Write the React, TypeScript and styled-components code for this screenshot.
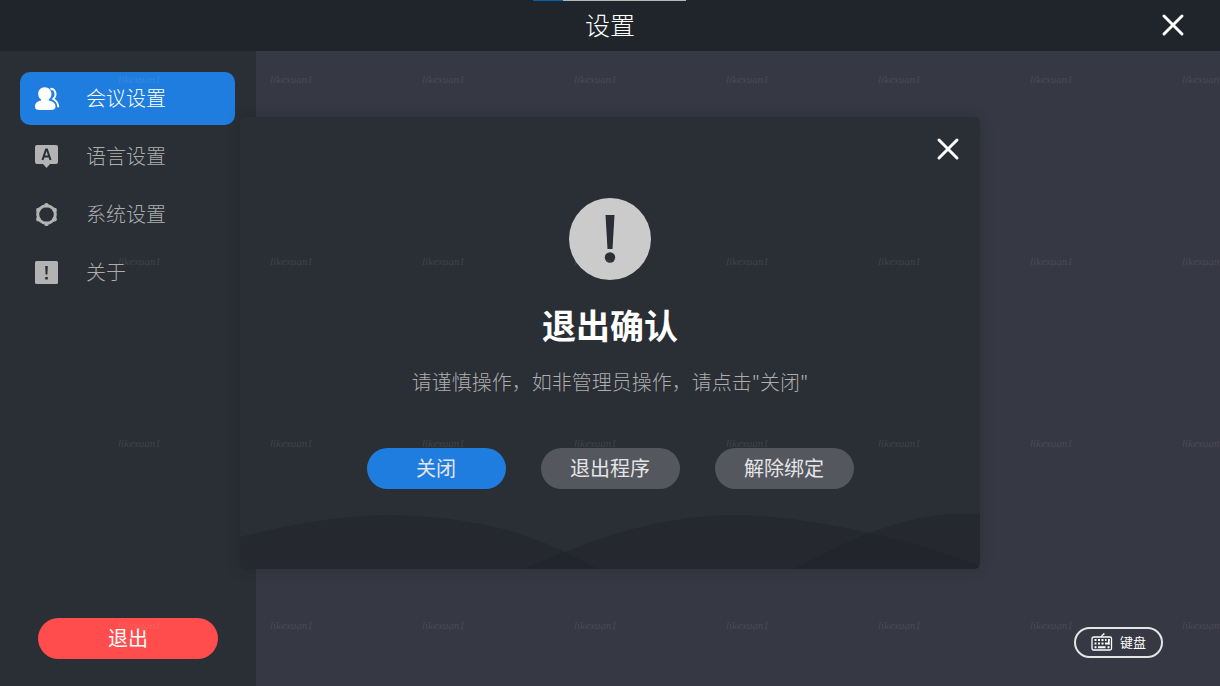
import React from 'react';
import styled, { createGlobalStyle } from 'styled-components';

const Global = createGlobalStyle`
  * { box-sizing: border-box; }
  body {
    margin: 0;
    background: #363843;
    font-family: "Noto Sans CJK SC", sans-serif;
  }
  button { font-family: inherit; border: 0; padding: 0; cursor: pointer; }
`;

const Page = styled.div`
  position: relative;
  min-height: 100vh;
  display: flex;
  flex-direction: column;
  overflow: hidden;
`;

const Header = styled.header`
  height: 51px;
  background: #20242b;
  display: grid;
  grid-template-columns: 1fr auto 1fr;
  align-items: center;
  padding: 0 35px 1px;
`;

const TopHandle = styled.div`
  position: absolute;
  top: 0;
  left: 50%;
  width: 153px;
  height: 1px;
  margin-left: -77px;
  background: linear-gradient(to right, #0063b1 30px, #b4b8b8 30px);
`;

const HeaderTitle = styled.h1`
  grid-column: 2;
  margin: 0;
  padding-bottom: 2px;
  font-size: 25px;
  line-height: 36px;
  font-weight: 300;
  color: #fff;
`;

const CloseButton = styled.button`
  display: block;
  justify-self: end;
  width: 24px;
  height: 24px;
  background: transparent;
  color: #fff;
  svg { display: block; }
`;

const Body = styled.div`
  flex: 1;
  display: flex;
`;

const Sidebar = styled.aside`
  width: 256px;
  flex: none;
  background: #2a2e35;
  padding: 21px 20px 27px;
  display: flex;
  flex-direction: column;
  justify-content: space-between;
`;

const Menu = styled.nav`
  display: flex;
  flex-direction: column;
  gap: 5px;
`;

const MenuItem = styled.button<{ $active?: boolean }>`
  width: 215px;
  height: 53px;
  border-radius: 10px;
  padding: 0 13px 2px;
  display: flex;
  align-items: center;
  gap: 26px;
  font-size: 20px;
  line-height: 30px;
  font-weight: 300;
  background: ${p => (p.$active ? '#207de0' : 'transparent')};
  color: ${p => (p.$active ? '#fff' : '#adadad')};
  svg { flex: none; }
`;

const ExitButton = styled.button`
  align-self: center;
  width: 180px;
  height: 41px;
  border-radius: 21px;
  padding-bottom: 2px;
  background: #ff4d4d;
  color: #fff;
  font-size: 20px;
  line-height: 30px;
`;

const Content = styled.main`
  flex: 1;
  display: flex;
  justify-content: flex-end;
  align-items: flex-end;
  padding: 28px 57px;
`;

const KeyboardButton = styled.button`
  width: 89px;
  height: 31px;
  border: 2px solid #e4e5e7;
  border-radius: 16px;
  background: transparent;
  color: #fff;
  display: flex;
  align-items: center;
  justify-content: center;
  gap: 7px;
  padding-bottom: 1px;
  font-size: 13px;
  line-height: 20px;
`;

const Overlay = styled.div`
  position: absolute;
  inset: 0;
  display: flex;
  align-items: center;
  justify-content: center;
  pointer-events: none;
`;

const Dialog = styled.section`
  position: relative;
  width: 740px;
  height: 452px;
  border-radius: 6px;
  background: #2a2e35;
  box-shadow: 0 0 14px rgba(24, 24, 28, 0.25);
  overflow: hidden;
  pointer-events: auto;
  display: flex;
  flex-direction: column;
  align-items: center;
  padding: 20px;
`;

const DialogHead = styled.div`
  align-self: stretch;
  display: flex;
  justify-content: flex-end;
`;

const AlertMark = styled.svg`
  margin-top: 37px;
`;

const DialogTitle = styled.h2`
  margin: 18px 0 0;
  font-size: 34px;
  line-height: 54px;
  font-weight: 700;
  color: #fff;
`;

const DialogText = styled.p`
  margin: 15px 0 0;
  font-size: 20px;
  line-height: 30px;
  font-weight: 300;
  color: #adadad;
`;

const Actions = styled.div`
  display: flex;
  gap: 35px;
  margin-top: 51px;
  position: relative;
`;

const ActionButton = styled.button<{ $primary?: boolean }>`
  width: 139px;
  height: 41px;
  border-radius: 21px;
  padding-bottom: 2px;
  font-size: 20px;
  line-height: 30px;
  color: #e4e5e7;
  background: ${p => (p.$primary ? '#207de0' : '#55575e')};
`;

const Waves = styled.svg`
  position: absolute;
  left: 0;
  bottom: 0;
  width: 100%;
  height: 56px;
`;

const MarkLayer = styled.div`
  position: absolute;
  top: 72px;
  left: 118px;
  display: grid;
  grid-template-columns: repeat(8, 152px);
  grid-auto-rows: 182px;
  pointer-events: none;
`;

const Mark = styled.span`
  font-family: "Liberation Serif", serif;
  font-style: italic;
  font-size: 11px;
  line-height: 14px;
  color: rgba(203, 203, 203, 0.16);
`;

const Cross = () => (
  <svg width="24" height="24" viewBox="0 0 24 24" fill="none" stroke="currentColor" strokeWidth="3" strokeLinecap="round" aria-hidden="true">
    <path d="M3 3 L21 21 M21 3 L3 21" />
  </svg>
);

const PeopleIcon = () => (
  <svg width="27" height="26" viewBox="0 0 27 26" fill="currentColor" aria-hidden="true">
    <path d="M11.700 2.200c-3.900 0-6.500 2.800-6.500 6.600 0 2.500 1.100 4.600 2.900 5.800v1C4.500 16.300 2 18 2 21.800c0 2.200 1.600 3.200 4.500 3.200h11.500c2.900 0 4.500-1 4.500-3.200 0-3.800-2.700-5.500-6.800-6.200v-1c1.700-1.200 2.800-3.300 2.800-5.800 0-3.800-2.900-6.600-6.800-6.600z" />
    <path d="M18.200 3.800c4.500.6 6 6.700 2 10.200 3 1.600 4.800 3.600 5 7.500" fill="none" stroke="currentColor" strokeWidth="1.900" strokeLinecap="round" />
  </svg>
);

const LanguageIcon = () => (
  <svg width="27" height="26" viewBox="0 0 27 26" aria-hidden="true">
    <path d="M4 2h19a2 2 0 0 1 2 2v15a2 2 0 0 1-2 2h-6l-3.500 4L10 21H4a2 2 0 0 1-2-2V4a2 2 0 0 1 2-2z" fill="#b3b3b3" />
    <path d="M9.500 17 L13 6.500 h1 L17.500 17 M10.800 13.500 h5.400" fill="none" stroke="#2a2e35" strokeWidth="2" />
  </svg>
);

const GearIcon = () => (
  <svg width="27" height="26" viewBox="0 0 27 26" fill="none" stroke="#b3b3b3" aria-hidden="true">
    <circle cx="13.500" cy="13.500" r="8.800" strokeWidth="3" />
    <path d="M13.500 4.100v.1M21.700 8.900v.1M21.700 18.100v.1M13.500 22.800v.1M5.300 18.100v.1M5.300 8.900v.1" strokeWidth="4.400" strokeLinecap="round" />
  </svg>
);

const AboutIcon = () => (
  <svg width="27" height="26" viewBox="0 0 27 26" aria-hidden="true">
    <rect x="2" y="2" width="23" height="23" rx="1.500" fill="#b3b3b3" />
    <path d="M12.200 7h2.600l-.4 8.500h-1.800zM12.200 18h2.600v2.500h-2.600z" fill="#2a2e35" />
  </svg>
);

const KeyboardIcon = () => (
  <svg width="22" height="18" viewBox="0 0 22 18" fill="none" stroke="currentColor" aria-hidden="true">
    <rect x="1" y="4" width="19.500" height="13" rx="1.500" strokeWidth="1.300" />
    <path d="M10.500 4c0-2 1-2.300 2.300-2.600V0" strokeWidth="1.200" />
    <path d="M3.500 7h2M7 7h2M10.500 7h2M14 7h1.500M17 7h1.500M3.500 10.500h2M7 10.500h2M10.500 10.500h2M14 10.500h4.500M3.500 14.200h2M7 14.200h7.500M16.500 14.200h2" strokeWidth="2" />
    <path d="M17.800 6v5.500" strokeWidth="1.600" />
  </svg>
);

const items = [
  { label: '会议设置', Icon: PeopleIcon },
  { label: '语言设置', Icon: LanguageIcon },
  { label: '系统设置', Icon: GearIcon },
  { label: '关于', Icon: AboutIcon },
];

export default function App() {
  return (
    <Page>
      <Global />
      <Header>
        <HeaderTitle>设置</HeaderTitle>
        <CloseButton aria-label="关闭设置"><Cross /></CloseButton>
      </Header>
      <TopHandle />
      <Body>
        <Sidebar>
          <Menu>
            {items.map(({ label, Icon }, i) => (
              <MenuItem key={label} $active={i === 0}><Icon />{label}</MenuItem>
            ))}
          </Menu>
          <ExitButton>退出</ExitButton>
        </Sidebar>
        <Content>
          <KeyboardButton><KeyboardIcon />键盘</KeyboardButton>
        </Content>
      </Body>
      <Overlay>
        <Dialog role="dialog" aria-labelledby="dialog-title">
          <Waves viewBox="0 0 740 56" preserveAspectRatio="none" fill="#202127" fillOpacity="0.5" aria-hidden="true">
            <path d="M0 24 C110 -3 170 -2 245 12 C290 21 325 38 358 56 H0z" />
            <path d="M284 56 C420 -4 490 -7 600 14 C660 25 700 38 740 53 V56z" />
            <path d="M554 56 C630 15 680 -2 740 1 V56z" />
          </Waves>
          <DialogHead>
            <CloseButton aria-label="关闭对话框"><Cross /></CloseButton>
          </DialogHead>
          <AlertMark width="82" height="82" viewBox="0 0 82 82" aria-hidden="true">
            <circle cx="41" cy="41" r="41" fill="#cbcbcb" />
            <path d="M36.500 17h9l-2 34h-5z" fill="#2a2e35" />
            <circle cx="41" cy="59.500" r="5.200" fill="#2a2e35" />
          </AlertMark>
          <DialogTitle id="dialog-title">退出确认</DialogTitle>
          <DialogText>请谨慎操作，如非管理员操作，请点击"关闭"</DialogText>
          <Actions>
            <ActionButton $primary>关闭</ActionButton>
            <ActionButton>退出程序</ActionButton>
            <ActionButton>解除绑定</ActionButton>
          </Actions>
        </Dialog>
      </Overlay>
      <MarkLayer aria-hidden="true">
        {Array.from({ length: 32 }, (_, i) => <Mark key={i}>likexuan1</Mark>)}
      </MarkLayer>
    </Page>
  );
}
